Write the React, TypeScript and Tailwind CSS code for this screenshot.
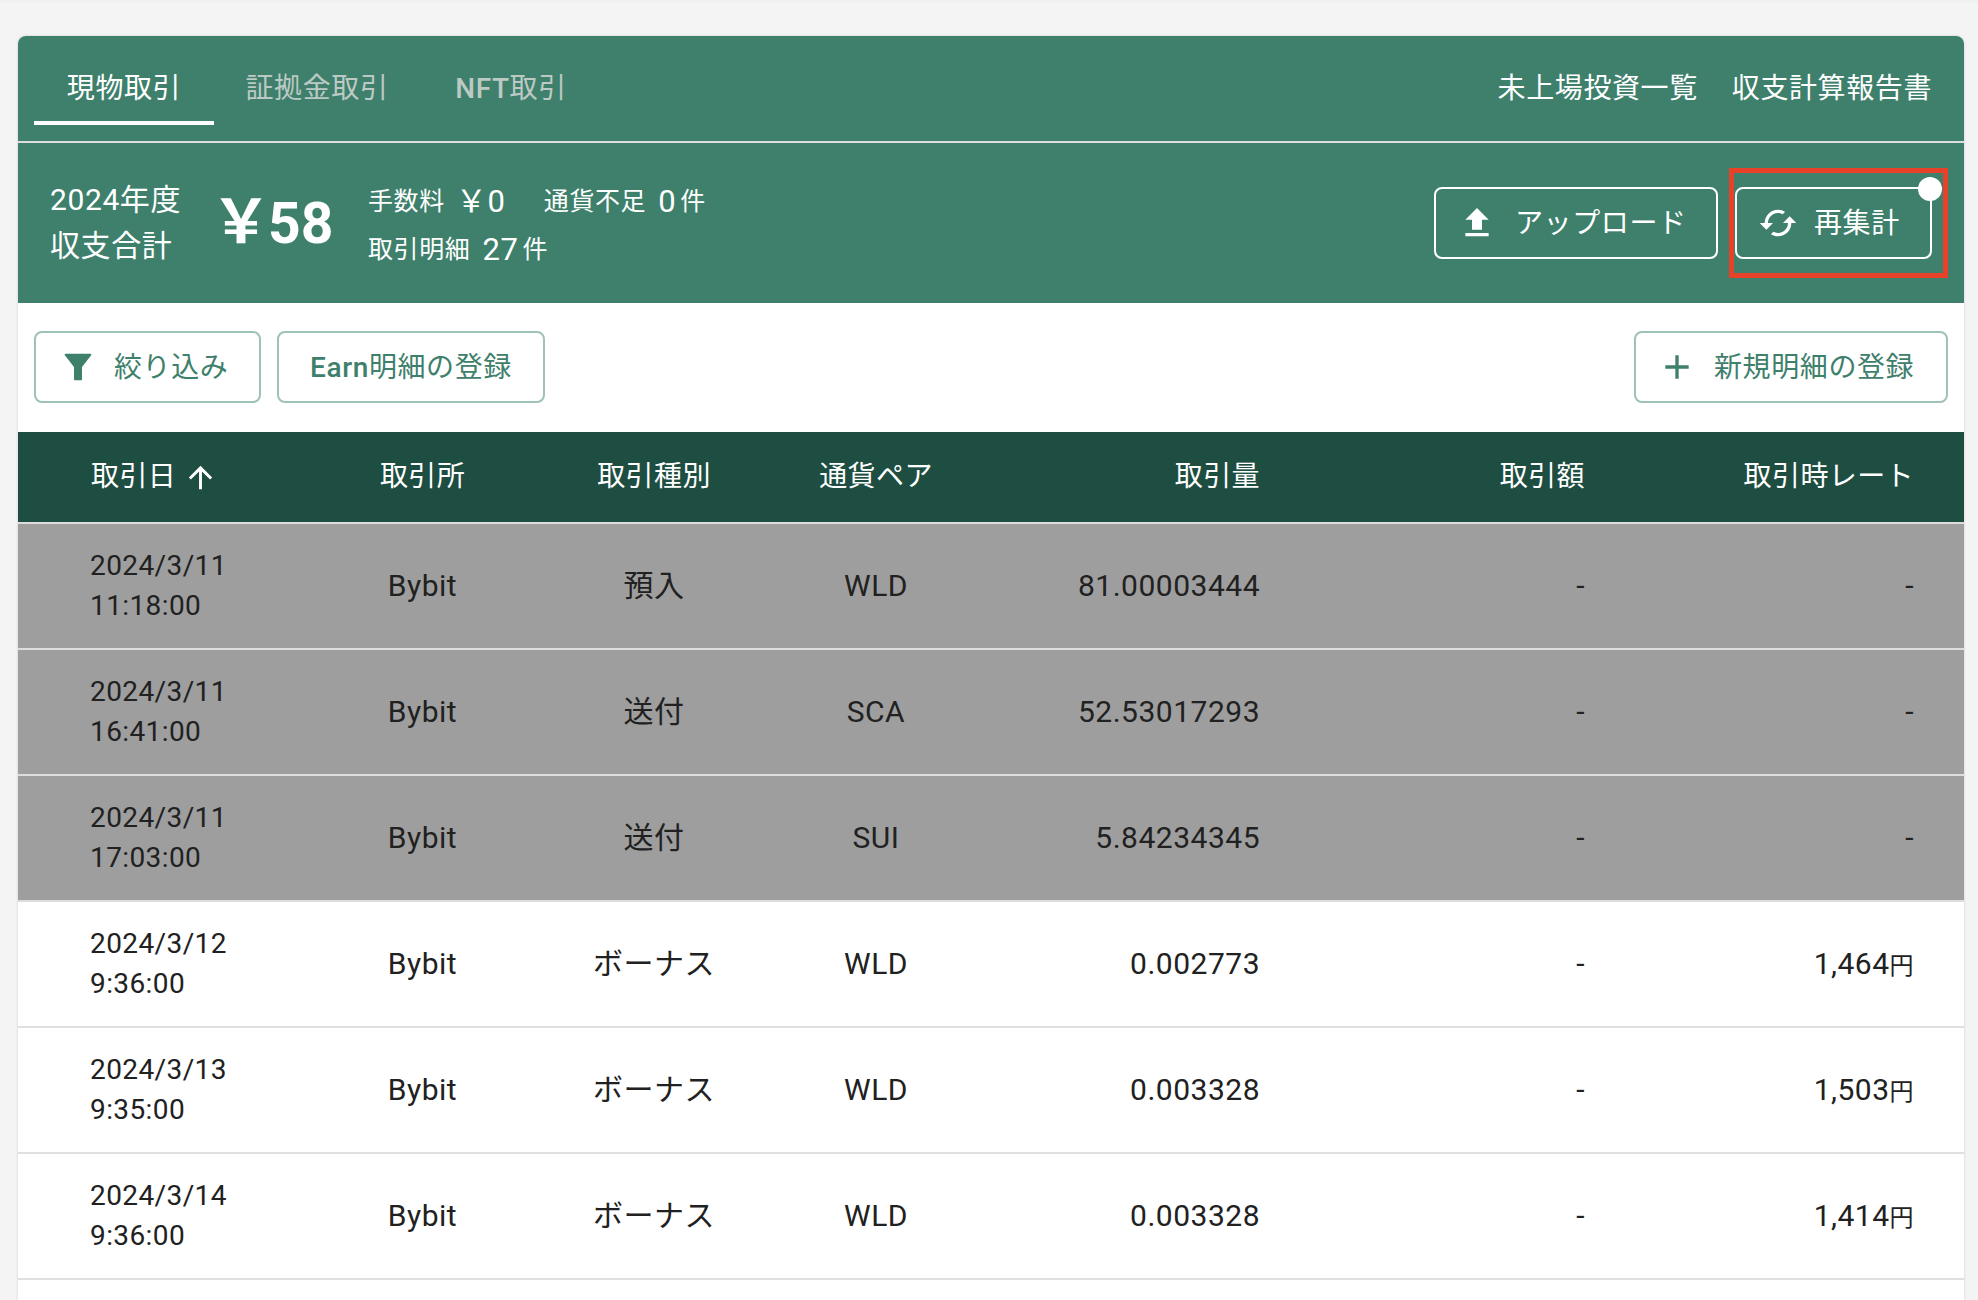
const font = "font-['Roboto','Noto_Sans_CJK_JP',sans-serif]";

function Ic({ d, className }: { d: string; className: string }) {
  return (
    <svg viewBox="0 0 24 24" fill="currentColor" className={className}>
      <path d={d} />
    </svg>
  );
}

const UP = "M9 16h6v-6h4l-7-7-7 7h4zm-4 2h14v2H5z";
const SYNC = "M19 8l-4 4h3c0 3.31-2.69 6-6 6-1.01 0-1.97-.25-2.8-.7l-1.46 1.46C8.97 19.54 10.43 20 12 20c4.42 0 8-3.58 8-8h3l-4-4zM6 12c0-3.31 2.69-6 6-6 1.01 0 1.97.25 2.8.7l1.46-1.46C15.03 4.46 13.57 4 12 4c-4.42 0-8 3.58-8 8H1l4 4 4-4H6z";
const PLUS = "M19 13h-6v6h-2v-6H5v-2h6V5h2v6h6v2z";
const FUNNEL = "M4.6 4h14.8a.6.6 0 0 1 .5 1L14.4 12v7.5a.5.5 0 0 1-.5.5h-3.8a.5.5 0 0 1-.5-.5V12L4.1 5a.6.6 0 0 1 .5-1z";
const ARROW = "M4 12l1.41 1.41L11 7.83V20h2V7.83l5.58 5.59L20 12l-8-8-8 8z";

const rows = [
  { d: "2024/3/11", t: "11:18:00", k: "預入", p: "WLD", q: "81.00003444", r: "-", g: true },
  { d: "2024/3/11", t: "16:41:00", k: "送付", p: "SCA", q: "52.53017293", r: "-", g: true },
  { d: "2024/3/11", t: "17:03:00", k: "送付", p: "SUI", q: "5.84234345", r: "-", g: true },
  { d: "2024/3/12", t: "9:36:00", k: "ボーナス", p: "WLD", q: "0.002773", r: "1,464", g: false },
  { d: "2024/3/13", t: "9:35:00", k: "ボーナス", p: "WLD", q: "0.003328", r: "1,503", g: false },
  { d: "2024/3/14", t: "9:36:00", k: "ボーナス", p: "WLD", q: "0.003328", r: "1,414", g: false },
];

const grid = "grid grid-cols-[292px_225px_238px_206px_331px_325px_329px] items-center";

export default function App() {
  return (
    <div className={`${font} h-[1300px] overflow-hidden border-t-[3px] border-[#f0f0f0] bg-[#f4f4f4] pt-[33px] pl-[18px] pr-[14px] tracking-[0.6px]`}>
      <div className="flex h-[1264px] flex-col overflow-hidden rounded-t-lg bg-white shadow-[0_0_3px_rgba(0,0,0,0.15)]">
        <div className="bg-[#3e806b] text-white">
          <div className="flex h-[107px] items-start justify-between border-b-2 border-[#dddddd] pl-4 pr-8">
            <div className="flex text-[28px]">
              <div className="flex h-[89px] w-[180px] items-center justify-center border-b-4 border-white pt-[21px]">現物取引</div>
              <div className="flex h-[89px] w-[206px] items-center justify-center pt-[17px] text-[#bcc9c4]">証拠金取引</div>
              <div className="flex h-[89px] w-[182px] items-center justify-center pt-[17px] text-[#bcc9c4]"><span className="font-medium">NFT</span>取引</div>
            </div>
            <div className="flex h-[89px] items-center gap-[34px] pt-[17px] text-[28px]">
              <span>未上場投資一覧</span>
              <span>収支計算報告書</span>
            </div>
          </div>
          <div className="flex h-[160px] items-center justify-between pl-8 pr-8">
            <div className="flex items-center">
              <div className="w-[170px] text-[30px] leading-[46px]">
                <div>2024年度</div>
                <div>収支合計</div>
              </div>
              <div className="flex w-[148px] items-center text-[57px] font-bold leading-none tracking-normal">
                <span className="-ml-[9px] mr-[-3px] text-[60px]">￥</span>58
              </div>
              <div className="mt-[5px] text-[25px] leading-[48px]">
                <div className="flex items-center">
                  <span>手数料</span>
                  <span className="ml-[11px] w-[88px] text-[31px]">￥0</span>
                  <span>通貨不足</span>
                  <span className="ml-3 text-[31px]">0</span>
                  <span className="ml-1">件</span>
                </div>
                <div className="flex items-center">
                  <span>取引明細</span>
                  <span className="ml-3 text-[31px]">27</span>
                  <span className="ml-1">件</span>
                </div>
              </div>
            </div>
            <div className="flex items-center gap-[17px]">
              <button className="flex h-[72px] w-[284px] items-center justify-start gap-[18px] rounded-lg border-2 border-white pl-[21px] text-[28px]">
                <Ic d={UP} className="h-10 w-10" />
                <span className="pt-[2px]">アップロード</span>
              </button>
              <div className="relative">
                <button className="flex h-[72px] w-[197px] items-center justify-start gap-4 rounded-lg border-2 border-white pl-[21px] text-[28px]">
                  <Ic d={SYNC} className="h-10 w-10" />
                  <span className="pt-[2px]">再集計</span>
                </button>
                <div className="absolute right-[-10px] top-[-10px] h-6 w-6 rounded-full bg-white" />
                <div className="absolute bottom-[-19px] left-[-6px] right-[-16px] top-[-19px] border-[5px] border-[#e8412a]" />
              </div>
            </div>
          </div>
        </div>

        <div className="flex h-[129px] items-center justify-between pl-4 pr-4 pb-[1px] text-[#3e806b]">
          <div className="flex items-center gap-4">
            <button className="flex h-[72px] w-[227px] items-center justify-start gap-4 rounded-lg border-2 border-[#9ec2b6] pl-[22px] text-[28px]">
              <Ic d={FUNNEL} className="h-10 w-10" />
              <span className="pt-[2px]">絞り込み</span>
            </button>
            <button className="flex h-[72px] w-[268px] items-center justify-center rounded-lg border-2 border-[#9ec2b6] pt-[2px] text-[28px]">
              <span className="font-medium">Earn</span>明細の登録
            </button>
          </div>
          <button className="flex h-[72px] w-[314px] items-center justify-start gap-[17px] rounded-lg border-2 border-[#9ec2b6] pl-[21px] text-[28px]">
            <Ic d={PLUS} className="h-10 w-10" />
            <span className="pt-[2px]">新規明細の登録</span>
          </button>
        </div>

        <div className={`${grid} h-[92px] border-b-2 border-[#dddddd] bg-[#1e4d41] text-[28px] tracking-[0.4px] text-white`}>
          <div className="flex items-center pl-[73px]">取引日<Ic d={ARROW} className="ml-[7px] h-[35px] w-[35px]" /></div>
          <div className="text-center">取引所</div>
          <div className="text-center">取引種別</div>
          <div className="text-center">通貨ペア</div>
          <div className="pr-[50px] text-right">取引量</div>
          <div className="pr-[50px] text-right">取引額</div>
          <div className="pr-[50px] text-right">取引時レート</div>
        </div>

        {rows.map((r, i) => (
          <div key={i} className={`${grid} h-[126px] border-b-2 text-[30px] tracking-[0.5px] text-[#212121] ${r.g ? "border-[#dddddd] bg-[#9e9e9e]" : "border-[#e0e0e0] bg-white"}`}>
            <div className="pl-[72px] text-[28px] leading-10 tracking-[0.4px]">
              <div>{r.d}</div>
              <div>{r.t}</div>
            </div>
            <div className="pb-[2px] text-center">Bybit</div>
            <div className="pb-[2px] text-center">{r.k}</div>
            <div className="pb-[2px] text-center">{r.p}</div>
            <div className="pb-[2px] pr-[50px] text-right">{r.q}</div>
            <div className="pb-[2px] pr-[50px] text-right">-</div>
            <div className="pb-[2px] pr-[50px] text-right">{r.r}{r.r !== "-" && <span className="text-[24px]">円</span>}</div>
          </div>
        ))}
      </div>
    </div>
  );
}
